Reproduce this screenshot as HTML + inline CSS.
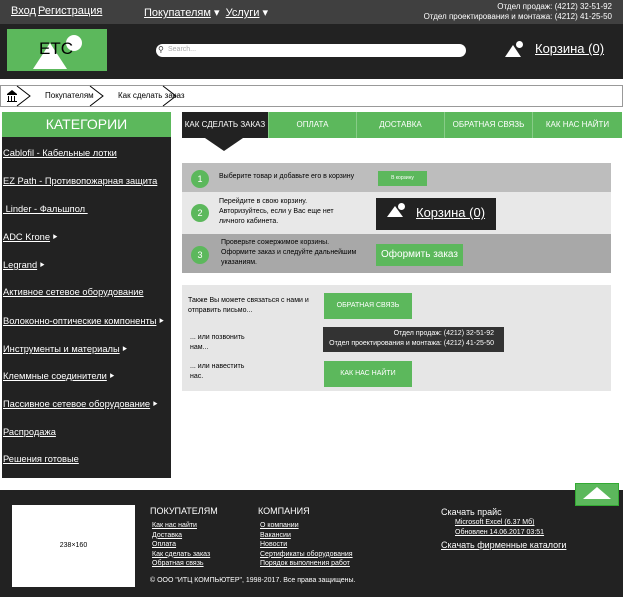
<!DOCTYPE html>
<html><head><meta charset="utf-8"><style>
*{margin:0;padding:0;box-sizing:border-box}
body{width:623px;height:597px;position:relative;background:#fff;font-family:"Liberation Sans","Noto Sans CJK SC",sans-serif;overflow:hidden;color:#000}
.a{position:absolute}
a,u{color:inherit}
.w{color:#fff}
.g{background:#5cb85c}
.c{position:absolute;left:3px;color:#fff;font-size:9.3px;line-height:12px;white-space:nowrap}
.c u{text-decoration:underline}
.ar{font-size:5px;vertical-align:middle}
</style></head><body>
<div class="a" style="left:0;top:0;width:623px;height:24px;background:#404040"></div>
<div class="a w" style="left:11px;top:5px;font-size:11px;text-decoration:underline">Вход</div>
<div class="a w" style="left:38px;top:5px;font-size:11px;text-decoration:underline">Регистрация</div>
<div class="a w" style="left:144px;top:6px;font-size:11px"><u>Покупателям</u> ▾ &nbsp;<u>Услуги</u> ▾</div>
<div class="a w" style="right:11px;top:2px;font-size:8px;text-align:right;line-height:10px">Отдел продаж: (4212) 32-51-92<br>Отдел проектирования и монтажа: (4212) 41-25-50</div>
<div class="a" style="left:0;top:24px;width:623px;height:55px;background:#222"></div>
<div class="a g" style="left:7px;top:29px;width:100px;height:42px;overflow:hidden">
 <div class="a" style="left:59px;top:6px;width:16px;height:16px;border-radius:50%;background:#fff"></div>
 <div class="a" style="left:26px;top:14px;width:0;height:0;border-left:17px solid transparent;border-right:17px solid transparent;border-bottom:26px solid #fff"></div>
 <div class="a" style="left:32px;top:10px;font-size:17px">ETC</div>
</div>
<div class="a" style="left:156px;top:44px;width:310px;height:13px;background:#fff;border-radius:7px;font-size:7px;color:#aaa;padding:2px 0 0 12px">Search...</div>
<div class="a" style="left:158px;top:45px;font-size:8px;color:#333">⚲</div>
<div class="a" style="left:505px;top:45px;width:0;height:0;border-left:8px solid transparent;border-right:8px solid transparent;border-bottom:12px solid #fff"></div>
<div class="a" style="left:516px;top:41px;width:7px;height:7px;border-radius:50%;background:#fff"></div>
<div class="a w" style="left:535px;top:41px;font-size:13px;text-decoration:underline">Корзина (0)</div>
<div class="a" style="left:0;top:85px;width:623px;height:22px;border:1px solid #999;background:#fff"></div>
<svg class="a" style="left:0;top:85px" width="220" height="22"><path d="M17 1 L30 11 L17 21 M90 1 L103 11 L90 21 M163 1 L176 11 L163 21" stroke="#000" fill="none" stroke-width="1"/><path d="M7 9 L12 5 L17 9 Z M7 9h10v1H7z M8 11h1v5H8zM11 11h1v5h-1zM14 11h1v5h-1zM7 16h10v1H7z" fill="#000"/></svg>
<div class="a" style="left:45px;top:91px;font-size:8px">Покупателям</div>
<div class="a" style="left:118px;top:91px;font-size:8px">Как сделать заказ</div>
<div class="a" style="left:2px;top:112px;width:169px;height:366px;background:#222"></div>
<div class="a g w" style="left:2px;top:112px;width:169px;height:25px;text-align:center;font-size:14px;line-height:25px">КАТЕГОРИИ</div>
<div class="c" style="top:147px"><u>Cablofil - Кабельные лотки</u></div>
<div class="c" style="top:175px"><u>EZ Path - Противопожарная защита</u></div>
<div class="c" style="top:203px"><u>&nbsp;Linder - Фальшпол&nbsp;</u></div>
<div class="c" style="top:231px"><u>ADC Krone</u> <span class="ar">▶</span></div>
<div class="c" style="top:259px"><u>Legrand</u> <span class="ar">▶</span></div>
<div class="c" style="top:286px"><u>Активное сетевое оборудование</u></div>
<div class="c" style="top:315px"><u>Волоконно-оптические компоненты</u> <span class="ar">▶</span></div>
<div class="c" style="top:343px"><u>Инструменты и материалы</u> <span class="ar">▶</span></div>
<div class="c" style="top:370px"><u>Клеммные соединители</u> <span class="ar">▶</span></div>
<div class="c" style="top:398px"><u>Пассивное сетевое оборудование</u> <span class="ar">▶</span></div>
<div class="c" style="top:426px"><u>Распродажа</u></div>
<div class="c" style="top:453px"><u>Решения готовые</u></div>
<div class="a w" style="left:182px;top:112px;width:440px;height:26px;font-size:8px;line-height:26px;text-align:center">
 <div class="a" style="left:0;width:86px;height:26px;background:#222">КАК СДЕЛАТЬ ЗАКАЗ</div>
 <div class="a g" style="left:86px;width:88px;height:26px;border-left:1px solid #8c8">ОПЛАТА</div>
 <div class="a g" style="left:174px;width:88px;height:26px;border-left:1px solid #8c8">ДОСТАВКА</div>
 <div class="a g" style="left:262px;width:88px;height:26px;border-left:1px solid #8c8">ОБРАТНАЯ СВЯЗЬ</div>
 <div class="a g" style="left:350px;width:90px;height:26px;border-left:1px solid #8c8">КАК НАС НАЙТИ</div>
</div>
<div class="a" style="left:205px;top:138px;width:0;height:0;border-left:19px solid transparent;border-right:19px solid transparent;border-top:13px solid #222"></div>
<div class="a" style="left:182px;top:163px;width:429px;height:29px;background:#bdbdbd"></div>
<div class="a" style="left:182px;top:192px;width:429px;height:42px;background:#e8e8e8"></div>
<div class="a" style="left:182px;top:234px;width:429px;height:39px;background:#a8a8a8"></div>
<div class="a g w" style="left:191px;top:170px;width:18px;height:18px;border-radius:50%;font-size:9px;line-height:18px;text-align:center">1</div>
<div class="a g w" style="left:191px;top:204px;width:18px;height:18px;border-radius:50%;font-size:9px;line-height:18px;text-align:center">2</div>
<div class="a g w" style="left:191px;top:246px;width:18px;height:18px;border-radius:50%;font-size:9px;line-height:18px;text-align:center">3</div>
<div class="a" style="left:219px;top:173px;font-size:7px">Выберите товар и добавьте его в корзину</div>
<div class="a g w" style="left:378px;top:171px;width:49px;height:15px;font-size:5px;line-height:15px;text-align:center">В корзину</div>
<div class="a" style="left:219px;top:197px;font-size:7px;line-height:10px">Перейдите в свою корзину.<br>Авторизуйтесь, если у Вас еще нет<br>личного кабинета.</div>
<div class="a" style="left:376px;top:198px;width:120px;height:32px;background:#222"></div>
<div class="a" style="left:387px;top:206px;width:0;height:0;border-left:8px solid transparent;border-right:8px solid transparent;border-bottom:11px solid #fff"></div>
<div class="a" style="left:398px;top:203px;width:7px;height:7px;border-radius:50%;background:#fff"></div>
<div class="a w" style="left:416px;top:205px;font-size:13px;text-decoration:underline">Корзина (0)</div>
<div class="a" style="left:221px;top:238px;font-size:7px;line-height:10px">Проверьте сожержимое корзины.<br>Оформите заказ и следуйте дальнейшим<br>указаниям.</div>
<div class="a g w" style="left:376px;top:244px;width:87px;height:22px;font-size:10px;line-height:22px;text-align:center">Оформить заказ</div>
<div class="a" style="left:182px;top:285px;width:429px;height:106px;background:#e6e6e6"></div>
<div class="a" style="left:188px;top:296px;font-size:7px;line-height:10px">Также Вы можете связаться с нами и<br>отправить письмо...</div>
<div class="a g w" style="left:324px;top:293px;width:88px;height:26px;font-size:7px;line-height:26px;text-align:center">ОБРАТНАЯ СВЯЗЬ</div>
<div class="a" style="left:190px;top:333px;font-size:7px;line-height:10px">... или позвонить<br>нам...</div>
<div class="a w" style="left:323px;top:327px;width:181px;height:25px;background:#333;font-size:7px;line-height:10px;text-align:right;padding:2px 10px 0 0">Отдел продаж: (4212) 32-51-92<br>Отдел проектирования и монтажа: (4212) 41-25-50</div>
<div class="a" style="left:190px;top:362px;font-size:7px;line-height:10px">... или навестить<br>нас.</div>
<div class="a g w" style="left:324px;top:361px;width:88px;height:26px;font-size:7px;line-height:26px;text-align:center">КАК НАС НАЙТИ</div>
<div class="a" style="left:0;top:490px;width:623px;height:107px;background:#222"></div>
<div class="a g" style="left:575px;top:483px;width:44px;height:23px;border:1px solid #3a3"></div>
<div class="a" style="left:583px;top:487px;width:0;height:0;border-left:14px solid transparent;border-right:14px solid transparent;border-bottom:12px solid #fff"></div>
<div class="a" style="left:12px;top:505px;width:123px;height:82px;background:#fff;font-size:7px;text-align:center;line-height:82px">238×160</div>
<div class="a w" style="left:150px;top:506px;font-size:9px">ПОКУПАТЕЛЯМ</div>
<div class="a w" style="left:152px;top:521px;font-size:7px;line-height:9.5px;text-decoration:underline">Как нас найти<br>Доставка<br>Оплата<br>Как сделать заказ<br>Обратная связь</div>
<div class="a w" style="left:258px;top:506px;font-size:9px">КОМПАНИЯ</div>
<div class="a w" style="left:260px;top:521px;font-size:7px;line-height:9.5px;text-decoration:underline">О компании<br>Вакансии<br>Новости<br>Сертификаты оборудования<br>Порядок выполнения работ</div>
<div class="a w" style="left:150px;top:577px;font-size:7px">© ООО "ИТЦ КОМПЬЮТЕР", 1998-2017. Все права защищены.</div>
<div class="a w" style="left:441px;top:507px;font-size:9px">Скачать прайс</div>
<div class="a w" style="left:455px;top:518px;font-size:7px;line-height:9.5px;text-decoration:underline">Microsoft Excel (6.37 Мб)<br>Обновлен 14.06.2017 03:51</div>
<div class="a w" style="left:441px;top:540px;font-size:9px;text-decoration:underline">Скачать фирменные каталоги</div>
</body></html>
